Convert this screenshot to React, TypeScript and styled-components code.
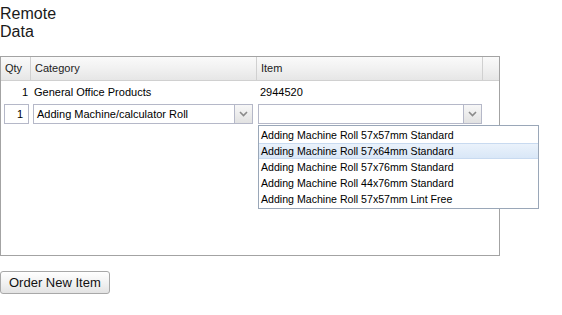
import styled, { createGlobalStyle } from 'styled-components';

const ITEMS = [
    'Adding Machine Roll 57x57mm Standard',
    'Adding Machine Roll 57x64mm Standard',
    'Adding Machine Roll 57x76mm Standard',
    'Adding Machine Roll 44x76mm Standard',
    'Adding Machine Roll 57x57mm Lint Free',
];

const Global = createGlobalStyle`
    body {
        margin: 0;
        background: #fff;
        font-family: "Liberation Sans", Arial, sans-serif;
        color: #000;
    }
`;

const Page = styled.div`
    position: relative;
    width: 562px;
    height: 315px;
`;

const Title = styled.div`
    width: 60px;
    font-size: 16px;
    line-height: 18px;
    padding-top: 5px;
    color: #1a1a1a;
`;

const Panel = styled.div`
    position: relative;
    margin-top: 15px;
    width: 498px;
    height: 198px;
    border: 1px solid #a3a3a3;
    font-size: 11px;
`;

const Header = styled.div`
    display: flex;
    height: 23px;
    background: linear-gradient(#fafafa, #f1f1f1 50%, #e6e6e6);
    border-bottom: 1px solid #d0d0d0;
`;

const HeadCell = styled.div<{ $w?: number }>`
    ${p => (p.$w ? `width: ${p.$w}px;` : 'flex: 1;')}
    box-sizing: border-box;
    padding: 0 4px;
    line-height: 23px;
    border-right: 1px solid #d0d0d0;
    color: #222;
    &:last-child { border-right: none; }
`;

const Row = styled.div<{ $h: number }>`
    display: flex;
    align-items: center;
    height: ${p => p.$h}px;
`;

const Cell = styled.div<{ $w: number; $right?: boolean }>`
    width: ${p => p.$w}px;
    box-sizing: border-box;
    padding: 0 3px;
    text-align: ${p => (p.$right ? 'right' : 'left')};
    white-space: nowrap;
`;

const NumInput = styled.div`
    width: 25px;
    height: 20px;
    margin-left: 3px;
    box-sizing: border-box;
    border: 1px solid #b5b8c8;
    text-align: right;
    padding-right: 5px;
    line-height: 18px;
    font-size: 11px;
`;

const Combo = styled.div<{ $w: number; $ml: number }>`
    display: flex;
    width: ${p => p.$w}px;
    height: 20px;
    margin-left: ${p => p.$ml}px;
    box-sizing: border-box;
    border: 1px solid #b5b8c8;
`;

const ComboText = styled.div`
    flex: 1;
    padding-left: 3px;
    line-height: 18px;
    font-size: 11px;
`;

const Trigger = styled.div`
    width: 17px;
    display: flex;
    align-items: center;
    justify-content: center;
    border-left: 1px solid #b5b8c8;
    background: linear-gradient(#f7f7f7, #e2e2e2);
`;

const List = styled.div`
    position: absolute;
    left: 257px;
    top: 68px;
    width: 281px;
    box-sizing: border-box;
    border: 1px solid #9aa7b8;
    background: #fff;
    padding: 1px 0;
    font-size: 10.6px;
`;

const Option = styled.div<{ $on?: boolean }>`
    height: 16px;
    line-height: 15px;
    padding-left: 2px;
    box-sizing: border-box;
    border: 1px solid ${p => (p.$on ? '#c8daf0' : 'transparent')};
    border-left: none;
    border-right: none;
    background: ${p => (p.$on ? 'linear-gradient(#eaf2fb, #d9e7f7)' : 'transparent')};
`;

const Button = styled.button`
    margin-top: 15px;
    height: 23px;
    padding: 0 8px;
    font-family: "Liberation Sans", Arial, sans-serif;
    font-size: 13px;
    color: #111;
    border: 1px solid #a8a8a8;
    border-radius: 3px;
    background: linear-gradient(#ffffff, #f2f2f2 50%, #e3e3e3);
`;

const Chevron = () => (
    <svg width={9} height={6} viewBox="0 0 9 6">
        <polyline points="1,1 4.5,4.5 8,1" fill="none" stroke="#8a8a8a" strokeWidth={1.6} />
    </svg>
);

const App = () => (
    <Page>
        <Global />
        <Title>Remote Data</Title>
        <Panel>
            <Header>
                <HeadCell $w={30}>Qty</HeadCell>
                <HeadCell $w={226}>Category</HeadCell>
                <HeadCell $w={226}>Item</HeadCell>
                <HeadCell />
            </Header>
            <Row $h={21}>
                <Cell $w={30} $right>1</Cell>
                <Cell $w={226}>General Office Products</Cell>
                <Cell $w={226}>2944520</Cell>
            </Row>
            <Row $h={23}>
                <NumInput>1</NumInput>
                <Combo $w={220} $ml={4}>
                    <ComboText>Adding Machine/calculator Roll</ComboText>
                    <Trigger><Chevron /></Trigger>
                </Combo>
                <Combo $w={224} $ml={5}>
                    <ComboText />
                    <Trigger><Chevron /></Trigger>
                </Combo>
            </Row>
            <List>
                {ITEMS.map((t, i) => (
                    <Option key={t} $on={i === 1}>{t}</Option>
                ))}
            </List>
        </Panel>
        <Button>Order New Item</Button>
    </Page>
);

export default App;
